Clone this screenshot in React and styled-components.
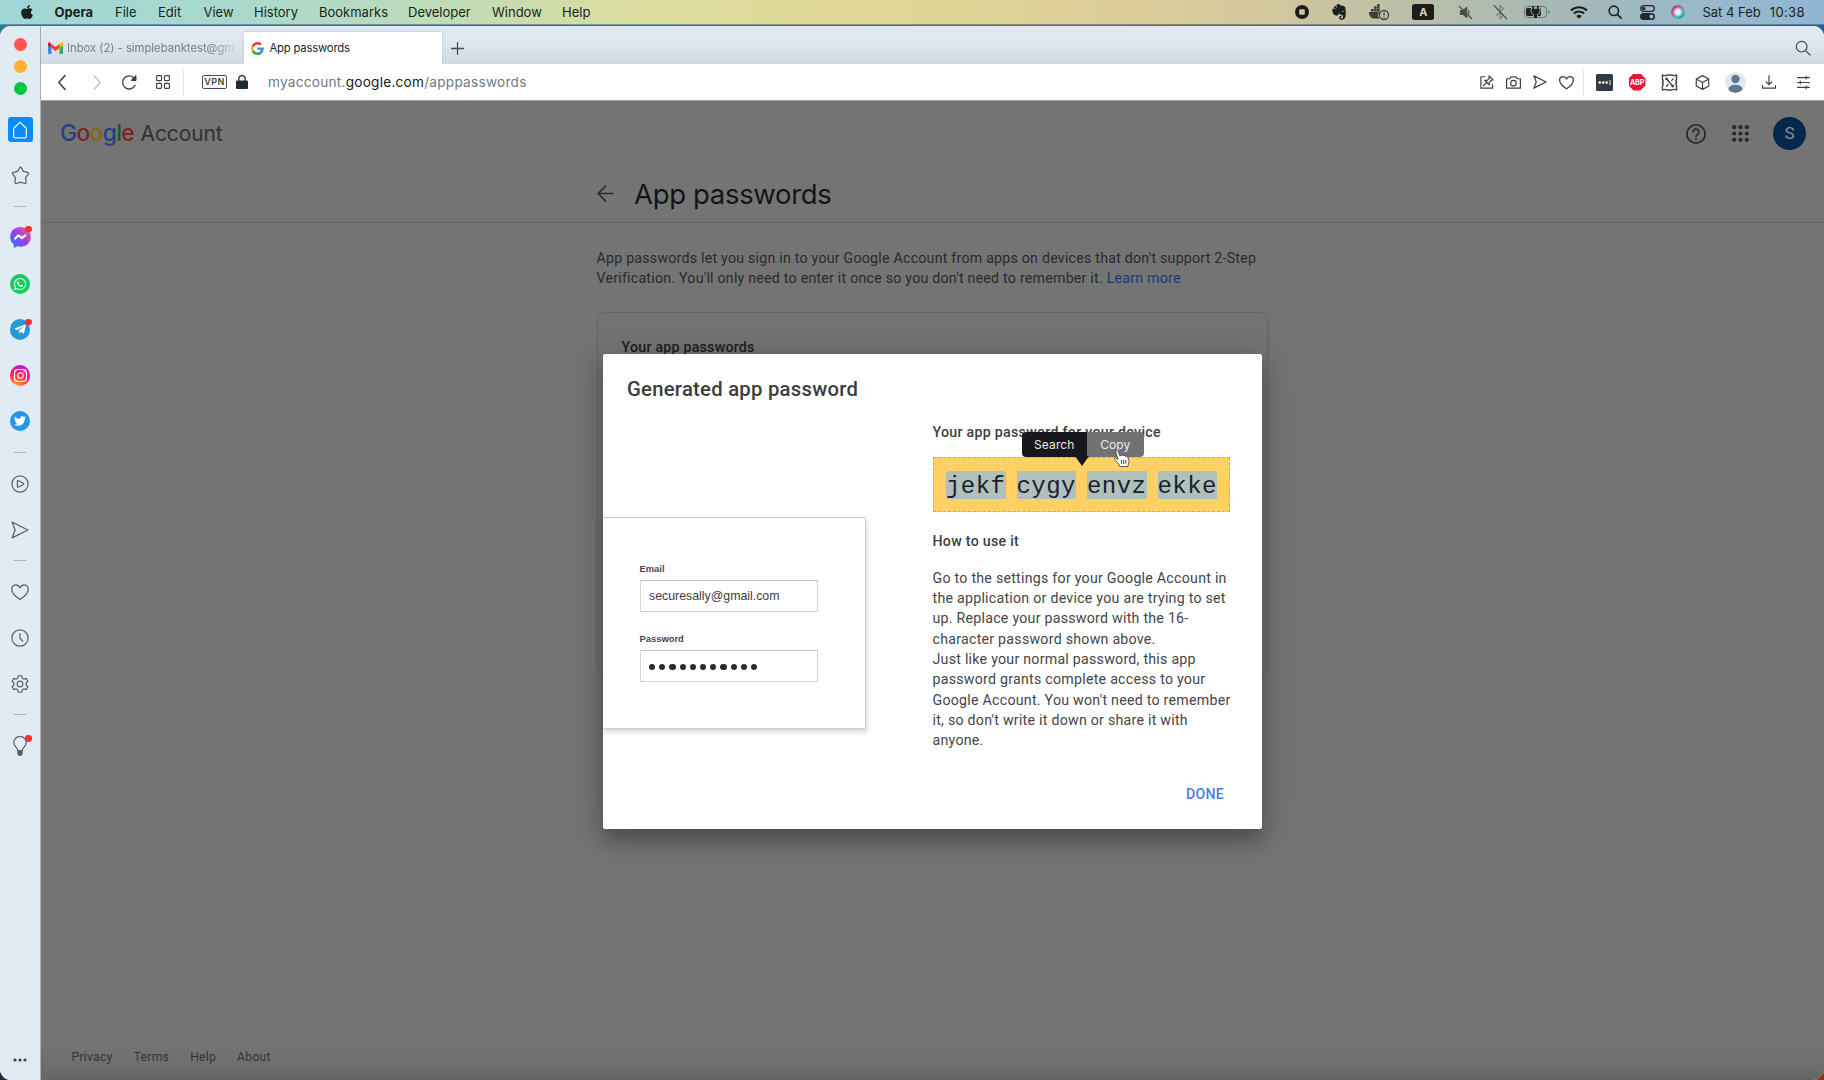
import React from "react";
import styled, { createGlobalStyle } from "styled-components";
import { FaApple, FaWhatsapp, FaTelegramPlane, FaInstagram, FaTwitter, FaEvernote } from "react-icons/fa";

const sans = `Roboto, "Liberation Sans", sans-serif`;
const ui = `Inter, Roboto, sans-serif`;

const GlobalStyle = createGlobalStyle`
  * { box-sizing: border-box; }
  body { margin: 0; overflow: hidden; background: #2b3a48; font-family: ${sans}; }
  svg { display: block; flex: none; overflow: visible; }
`;

const Desktop = styled.div`
  width: 1824px;
  height: 1080px;
  display: flex;
  flex-direction: column;
  overflow: hidden;
  background: linear-gradient(90deg, #2c7b98 0, #3f7482 30%, #7a6b45 60%, #1d62a0 100%) 0 0 / 100% 60px no-repeat,
    linear-gradient(90deg, #1d2b39 0, #1d2b39 50%, #8c2f18 100%);
`;

const MenuBar = styled.header`
  height: 25px;
  flex: none;
  display: flex;
  justify-content: space-between;
  padding: 0 19px 0 19px;
  background: linear-gradient(90deg, #9fd6d6 0, #aad9cb 14%, #bedcb8 24%, #dadc9f 34%, #e2d795 48%, #dccd98 62%, #d2c69e 70%, #bfc0a6 76%, #a9b9b3 84%, #9bb9c8 92%, #8fb6d4 100%);
  border-bottom: 1px solid rgba(50, 90, 110, 0.55);
  font: 400 13px/24px ${ui};
  color: #1a1f20;
`;

const Row = styled.div`
  display: flex;
  align-items: center;
`;

const MenuItem = styled.span`
  width: ${(p) => p.$w}px;
  white-space: nowrap;
  letter-spacing: ${(p) => p.$ls || 0}px;
  font-weight: ${(p) => (p.$bold ? 700 : 400)};
`;

const Slot = styled.span`
  width: ${(p) => p.$w}px;
  height: ${(p) => p.$h || 24}px;
  flex: none;
  display: flex;
  align-items: center;
  justify-content: center;
  color: ${(p) => p.$c || "inherit"};
`;

const InputBadge = styled.span`
  width: 22px;
  height: 16px;
  border-radius: 2.5px;
  background: #1c1d1a;
  color: #d8d2b8;
  font: 700 11px/16px ${ui};
  text-align: center;
`;

const Clock = styled.span`
  display: flex;
  gap: 9px;
  margin-left: 10px;
  white-space: nowrap;
  span + span { letter-spacing: 0.4px; }
`;

const Window = styled.div`
  flex: 1;
  margin-top: 1px;
  display: flex;
  border-radius: 11px;
  overflow: hidden;
  background: #e1eaf3;
`;

const Sidebar = styled.aside`
  width: 41px;
  flex: none;
  display: flex;
  flex-direction: column;
  align-items: center;
  border-right: 1px solid #a3afb7;
  background: #e1ebf4;
  color: #59636d;
`;

const Lights = styled.div`
  display: flex;
  flex-direction: column;
  gap: 9.4px;
  margin: 11.5px 0 12.6px;
  i { width: 13px; height: 13px; border-radius: 50%; }
  i:nth-child(1) { background: #ff5450; }
  i:nth-child(2) { background: #ffb232; }
  i:nth-child(3) { background: #02c640; }
`;

const SideItem = styled.div`
  position: relative;
  height: ${(p) => p.$h || 45.8}px;
  flex: none;
  width: 40px;
  display: flex;
  align-items: center;
  justify-content: center;
`;

const HomeTile = styled.span`
  width: 25px;
  height: 25px;
  border-radius: 3px;
  display: grid;
  place-items: center;
  background: #058cff;
  color: #e9f4ff;
`;

const Brand = styled.span`
  width: 20.5px;
  height: 20.5px;
  border-radius: 50%;
  display: grid;
  place-items: center;
  color: #fff;
  background: ${(p) => p.$bg};
`;

const Dot = styled.i`
  position: absolute;
  left: 25px;
  top: ${(p) => p.$top || 11}px;
  width: 6.5px;
  height: 6.5px;
  border-radius: 50%;
  background: #ff2e2e;
`;

const Rule = styled.hr`
  width: 12px;
  height: 1px;
  border: 0;
  margin: 0;
  flex: none;
  background: #a9b4bd;
`;

const Spacer = styled.div`
  flex: 1;
`;

const Main = styled.div`
  flex: 1;
  min-width: 0;
  display: flex;
  flex-direction: column;
`;

const TabBar = styled.div`
  height: 38px;
  flex: none;
  display: flex;
  align-items: flex-end;
  background: linear-gradient(180deg, #e2e9f2 0, #dde5ee 45%, #d1d9e4 100%);
`;

const Tab = styled.div`
  width: ${(p) => (p.$active ? 198.5 : 202.5)}px;
  height: 32px;
  display: flex;
  align-items: center;
  gap: ${(p) => (p.$active ? 6 : 4)}px;
  padding-left: 7px;
  background: ${(p) => (p.$active ? "#fff" : "transparent")};
  box-shadow: ${(p) => (p.$active ? "0 0 2px #aab8c6" : "none")};
  color: ${(p) => (p.$active ? "#1f252b" : "#74808c")};
  font: 400 11.3px/32px ${ui};
  white-space: nowrap;
  span {
    letter-spacing: ${(p) => (p.$active ? -0.2 : -0.02)}px;
    ${(p) => (p.$active ? "" : "mask-image: linear-gradient(90deg, #000 86%, rgba(0, 0, 0, 0.15) 100%);")}
  }
`;

const AddressBar = styled.div`
  height: 36px;
  flex: none;
  display: flex;
  align-items: center;
  background: #fff;
  color: #3c444c;
`;

const Divider = styled.span`
  width: 1px;
  height: 27px;
  background: #e4e7ea;
`;

const Vpn = styled.span`
  width: 25px;
  height: 14px;
  margin-left: 18px;
  border: 1.3px solid #444c54;
  border-radius: 2px;
  font: 600 9px/11.5px ${ui};
  letter-spacing: 0.4px;
  text-align: center;
`;

const Url = styled.span`
  margin-left: 11px;
  font: 400 13.6px/20px ${ui};
  letter-spacing: 0.26px;
  color: #6d7a88;
  white-space: nowrap;
  b { font-weight: 400; color: #14181c; }
`;

const Page = styled.main`
  flex: 1;
  min-height: 0;
  position: relative;
  display: flex;
  flex-direction: column;
  background: linear-gradient(180deg, #747474 0, #747474 96%, #716f71 98%, #666 100%);
  border-top: 1px solid #999;
`;

const PageHead = styled.div`
  height: 122px;
  flex: none;
  border-bottom: 1.5px solid #666;
`;

const TopRow = styled.div`
  height: 65.5px;
  display: flex;
  align-items: center;
  justify-content: space-between;
  padding: 0 18px 0 19px;
`;

const Logo = styled.div`
  display: flex;
  align-items: baseline;
  font-family: ${ui};
  font-size: 21px;
  line-height: 30px;
  color: #303132;
`;

const LogoWord = styled.span`
  width: 80.5px;
  font-size: 22.8px;
  letter-spacing: -0.65px;
  font-weight: 500;
`;

const LogoLetter = styled.span`
  color: ${(p) => p.$c};
`;

const Account = styled.span`
  letter-spacing: -0.1px;
`;

const Avatar = styled.span`
  width: 33px;
  height: 33px;
  margin-left: 10.5px;
  border-radius: 50%;
  background: #03284c;
  color: #8a8f95;
  font: 400 17px/33px ${sans};
  text-align: center;
`;

const TitleRow = styled.div`
  display: flex;
  align-items: center;
  gap: 20px;
  height: 54px;
  padding-left: 556px;
  color: #2c2d2e;
`;

const Title = styled.h1`
  margin: 0;
  font: 400 27.5px/36px ${ui};
  letter-spacing: -0.33px;
  color: #141415;
`;

const Intro = styled.p`
  width: 700px;
  margin: 24.5px 0 0 555.5px;
  font: 400 14.2px/20.35px ${sans};
  letter-spacing: 0.23px;
  color: #292a2c;
  white-space: nowrap;
  a { color: #173a78; }
`;

const Card = styled.section`
  width: 671px;
  height: 364.5px;
  margin: 23.5px 0 0 555.5px;
  padding: 24px;
  border: 1.5px solid #666;
  border-radius: 8px;
  font: 500 14.2px/20px ${sans};
  letter-spacing: 0.24px;
  color: #1d1e20;
`;

const Footer = styled.footer`
  display: flex;
  margin: auto 0 15px 30.5px;
  gap: 21px;
  font: 400 12.2px/16px ${sans};
  letter-spacing: 0.25px;
  color: #343536;
`;

const Modal = styled.div`
  position: absolute;
  left: 561.5px;
  top: 253px;
  width: 659.5px;
  height: 475px;
  border-radius: 2px;
  display: flex;
  flex-direction: column;
  background: #fff;
  box-shadow: 0 12px 18px rgba(0, 0, 0, 0.24), 0 3px 36px 4px rgba(0, 0, 0, 0.16);
`;

const ModalTitle = styled.h2`
  margin: 23px 0 0 24.5px;
  font: 500 20.3px/24px ${sans};
  letter-spacing: 0.25px;
  color: #3b3c3f;
`;

const ModalBody = styled.div`
  display: flex;
  justify-content: space-between;
  align-items: flex-start;
`;

const Sample = styled.div`
  width: 263.5px;
  height: 211.5px;
  margin-top: 116px;
  padding: 44px 0 0 37px;
  border: 1px solid #cfcfcf;
  border-left: 0;
  box-shadow: 1px 3px 5px rgba(0, 0, 0, 0.17);
`;

const Label = styled.div`
  font: 700 9.4px/14px "Liberation Sans", sans-serif;
  color: #47484a;
`;

const Field = styled.div`
  width: 178.5px;
  height: 32px;
  margin: ${(p) => p.$m};
  padding: 1.5px 0 0 8.5px;
  display: flex;
  align-items: center;
  gap: 3.9px;
  border: 1.2px solid #d4d4d4;
  border-top-color: #c2c2c2;
  font: 400 12.35px/29px "Liberation Sans", sans-serif;
  color: #3d3e40;
  i { width: 6.3px; height: 6.3px; border-radius: 50%; background: #2c2c2c; }
`;

const Info = styled.div`
  position: relative;
  width: 297px;
  margin: 20.5px 32.5px 0 0;
  font: 400 14.2px/20.35px ${sans};
  letter-spacing: 0.25px;
  color: #444649;
`;

const SubHead = styled.h3`
  margin: 0;
  font: 500 14.2px/20.35px ${sans};
  letter-spacing: 0.28px;
  color: #3d3f42;
`;

const Secret = styled.div`
  height: 54.5px;
  margin: 15.5px 0 19px;
  padding-left: 12.5px;
  display: flex;
  align-items: center;
  gap: 11px;
  background: #ffd163;
  border: 1px dashed #cfae62;
  font: 400 24px/32px "Liberation Mono", monospace;
  letter-spacing: 0.45px;
  color: #17222b;
  span { width: 59.5px; height: 28px; background: #b1c0ba; }
`;

const Body = styled.p`
  margin: 16.5px 0 0;
  white-space: nowrap;
`;

const Done = styled.button`
  align-self: flex-end;
  margin: auto 38px 25.5px 0;
  padding: 0;
  border: 0;
  background: none;
  font: 500 14.2px/20px ${sans};
  letter-spacing: 0.2px;
  color: #4a7cdd;
`;

const Popup = styled.div`
  position: absolute;
  left: 89px;
  top: 10px;
  display: flex;
  font: 400 12px/25px ${ui};
  letter-spacing: 0.1px;
  text-align: center;
  color: #e9e9ea;
`;

const PopupItem = styled.span`
  width: ${(p) => p.$w}px;
  height: 25px;
  background: ${(p) => (p.$hover ? "#727174" : "#18181c")};
  border-radius: ${(p) => (p.$hover ? "0 4px 4px 0" : "4px 0 0 4px")};
`;

const PopupArrow = styled.i`
  position: absolute;
  left: 53px;
  top: 24.5px;
  border: solid transparent;
  border-width: 10.5px 7.5px 0;
  border-top-color: #18181c;
`;

const Cursor = styled.span`
  position: absolute;
  left: 92px;
  top: 18.5px;
`;

const Abp = styled.span`
  width: 17px;
  height: 17px;
  flex: none;
  background: #ed1436;
  color: #fff;
  clip-path: polygon(30% 0, 70% 0, 100% 30%, 100% 70%, 70% 100%, 30% 100%, 0 70%, 0 30%);
  font: 700 7.2px/17px ${ui};
  letter-spacing: -0.2px;
  text-align: center;
`;

const Ico = ({ s = 16, w = 1.3, vb = 24, children, fill = "none" }) => (
  <svg width={s} height={s} viewBox={`0 0 ${vb} ${vb}`} fill={fill} stroke={fill === "none" ? "currentColor" : "none"} strokeWidth={(w * vb) / s} strokeLinecap="round" strokeLinejoin="round">
    {children}
  </svg>
);

const Send = ({ s }) => (
  <Ico s={s}><path d="M1.5 1.5 22.5 12 1.5 22.5 5.5 12Z" /></Ico>
);
const Heart = ({ s }) => (
  <Ico s={s}><path d="M12 22C9 20 1 14 1 8.200 1 4.800 3.500 2.500 6.500 2.500 9 2.500 11 4 12 6.500 13 4 15 2.500 17.500 2.500 20.500 2.500 23 4.800 23 8.200 23 14 15 20 12 22Z" /></Ico>
);
const Search = ({ s, w }) => (
  <Ico s={s} w={w}><circle cx="10" cy="10" r="8" /><path d="m16 16 6.500 6.500" /></Ico>
);

const GoogleG = () => (
  <svg width="13" height="13" viewBox="0 0 48 48">
    <path fill="#EA4335" d="M24 9.500c3.540 0 6.710 1.220 9.210 3.600l6.850-6.850C35.900 2.380 30.470 0 24 0 14.620 0 6.510 5.380 2.560 13.220l7.980 6.190C12.430 13.720 17.740 9.500 24 9.500z" />
    <path fill="#4285F4" d="M46.980 24.550c0-1.570-.15-3.090-.38-4.550H24v9.020h12.940c-.58 2.960-2.260 5.480-4.780 7.180l7.730 6c4.510-4.180 7.090-10.360 7.090-17.650z" />
    <path fill="#FBBC05" d="M10.530 28.590c-.48-1.450-.76-2.990-.76-4.590s.27-3.140.76-4.590l-7.980-6.190C.92 16.460 0 20.120 0 24s.92 7.540 2.560 10.780l7.970-6.190z" />
    <path fill="#34A853" d="M24 48c6.480 0 11.930-2.130 15.890-5.810l-7.730-6c-2.150 1.450-4.920 2.300-8.160 2.300-6.260 0-11.570-4.220-13.470-9.910l-7.980 6.190C6.510 42.620 14.620 48 24 48z" />
  </svg>
);

const Gmail = () => (
  <svg width="15" height="12" viewBox="0 0 30 24">
    <path fill="#4285F4" d="M0 4v18a2 2 0 0 0 2 2h5V10z" />
    <path fill="#34A853" d="M30 4v18a2 2 0 0 1-2 2h-5V10z" />
    <path fill="#C5221F" d="M0 4v3l7 5V5L4 1C2 0 0 1 0 4z" />
    <path fill="#FBBC04" d="M30 4v3l-7 5V5l3-4c2-1 4 0 4 3z" />
    <path fill="#EA4335" d="m7 4 8 6 8-6v8l-8 6-8-6z" />
  </svg>
);

const menu = [
  ["Opera", 60.5, 0], ["File", 43], ["Edit", 45.5], ["View", 50.5], ["History", 65],
  ["Bookmarks", 89], ["Developer", 84], ["Window", 70], ["Help", 40],
];

const MenuIcons = () => (
  <Row>
    <Slot $w={37}><Ico s={14} vb={14} fill="#1c1d1a"><path fillRule="evenodd" d="M7 0a7 7 0 1 0 0 14A7 7 0 0 0 7 0ZM5.300 4.200h3.400q1.100 0 1.100 1.100v3.400q0 1.100-1.100 1.100H5.300q-1.100 0-1.100-1.100V5.300q0-1.100 1.100-1.100Z" /></Ico></Slot>
    <Slot $w={38}><FaEvernote size={18} /></Slot>
    <Slot $w={42}>
      <svg width="20" height="16" viewBox="0 0 20 16">
        <path fill="#3d4036" d="M0 8h10.500a5 5 0 0 0 0 6.500H5C2 14.500 0 12 0 8ZM2 5h2.700v2.500H2ZM5 5h2.700v2.500H5ZM8 5h2.700v2.500H8ZM5 2.300h2.700v2.400H5ZM8 2.300h2.700v2.400H8ZM8 0h2.700v2H8Z" />
        <circle cx="15" cy="11" r="4.500" fill="none" stroke="#3d4036" strokeWidth="1.300" />
        <path d="M15 8.500v3M15 12.700v1" stroke="#3d4036" strokeWidth="1.400" />
      </svg>
    </Slot>
    <Slot $w={46}><InputBadge>A</InputBadge></Slot>
    <Slot $w={38} $c="#4b5046">
      <Ico s={15} w={1.1}><path fill="currentColor" d="M4 9h4l6-5v16l-6-5H4Z" /><path d="M2 2 22 22M17 9q2 3 0 6" /></Ico>
    </Slot>
    <Slot $w={32} $c="#777e74">
      <Ico s={16} w={1.1}><path d="m7 7 10 10-5 5V2l5 5L7 17" /><path stroke="#444a44" d="M3 2 22 22" /></Ico>
    </Slot>
    <Slot $w={42}>
      <svg width="26" height="12" viewBox="0 0 26 12">
        <rect x=".5" y=".5" width="22" height="11" rx="3" fill="none" stroke="#6b736e" />
        <path d="M24.200 4v4q1.300-.6 1.300-2t-1.300-2Z" fill="#6b736e" />
        <rect x="2" y="2" width="15" height="8" rx="1.500" fill="#1f2120" />
        <path d="M7 2.500h9v3q0 2.300-2.500 2.900V12.500h-4V8.400Q7 7.800 7 5.500Z" fill="#1f2120" stroke="#b3bab0" strokeWidth=".8" />
        <path d="M9.200-.3v3.500M13.800-.3v3.500" stroke="#1f2120" strokeWidth="1.700" />
      </svg>
    </Slot>
    <Slot $w={41}>
      <svg width="18" height="13" viewBox="0 0 18 13" fill="none" stroke="#1b1d1d" strokeWidth="2">
        <path d="M1 4.500a11.500 11.500 0 0 1 16 0M3.900 7.500a7.300 7.300 0 0 1 10.200 0" />
        <path d="M9 12.800 6.200 10a4 4 0 0 1 5.600 0Z" fill="#1b1d1d" stroke="none" />
      </svg>
    </Slot>
    <Slot $w={31}><Search s={14} w={1.6} /></Slot>
    <Slot $w={34}>
      <svg width="15" height="15" viewBox="0 0 15 15" fill="none" stroke="#23282a">
        <rect x=".7" y=".7" width="13.600" height="5.600" rx="2.800" strokeWidth="1.300" />
        <circle cx="3.700" cy="3.500" r="1.800" fill="#23282a" stroke="none" />
        <rect x="0" y="8" width="15" height="7" rx="3.500" fill="#23282a" stroke="none" />
        <circle cx="11.400" cy="11.500" r="1.900" fill="#a7bcc6" stroke="none" />
      </svg>
    </Slot>
    <Slot $w={28}>
      <svg width="14" height="14" viewBox="0 0 14 14">
        <defs>
          <linearGradient id="siri" x1="0" y1="0" x2="1" y2="1"><stop offset="0" stopColor="#4a4aa0" /><stop offset=".35" stopColor="#e0508c" /><stop offset=".65" stopColor="#39c1c4" /><stop offset="1" stopColor="#2464b0" /></linearGradient>
          <radialGradient id="siriGlow"><stop offset="0" stopColor="#fff" /><stop offset=".5" stopColor="#eef8fb" stopOpacity=".8" /><stop offset="1" stopColor="#fff" stopOpacity="0" /></radialGradient>
        </defs>
        <circle cx="7" cy="7" r="7" fill="url(#siri)" />
        <circle cx="6.800" cy="7" r="5" fill="url(#siriGlow)" />
      </svg>
    </Slot>
    <Clock><span>Sat 4 Feb</span><span>10:38</span></Clock>
  </Row>
);

const Side = () => (
  <Sidebar>
    <Lights><i /><i /><i /></Lights>
    <SideItem $h={44}><HomeTile><Ico s={18} w={1.3}><path d="M12 1.500 20.500 10v10.500q0 2-2 2h-13q-2 0-2-2V10Z" /></Ico></HomeTile></SideItem>
    <SideItem $h={48}><Ico s={19}><path d="M12 1.500q.7 0 1.200 1l2.400 4.300 5.300 1.200q2.300.7.700 2.500l-3.200 4.100.6 5.800q0 2.200-2 1.700L12 20.300l-5 1.800q-2 .5-2-1.700l.6-5.800L2.400 10.500Q.8 8.700 3.100 8l5.300-1.200 2.400-4.300q.5-1 1.200-1Z" /></Ico></SideItem>
    <SideItem $h={14}><Rule /></SideItem>
    <SideItem $h={47}>
      <svg width="21" height="21" viewBox="0 0 21 21">
        <defs><linearGradient id="msg" x1="0" y1="1" x2="1" y2="0"><stop offset="0" stopColor="#1583ff" /><stop offset=".5" stopColor="#9a3df2" /><stop offset="1" stopColor="#ff6270" /></linearGradient></defs>
        <path fill="url(#msg)" d="M10.500 0C4.500 0 .2 4.200.2 10c0 3 1.200 5.600 3.300 7.300L4 21l3.400-1.700c1 .3 2 .4 3.100.4 6 0 10.300-4.200 10.300-9.800S16.500 0 10.500 0Z" />
        <path fill="none" stroke="#fff" strokeWidth="2.200" strokeLinejoin="round" d="m4.500 12.300 4-3.900 3.400 2.700L16 7.800" />
      </svg>
      <Dot $top={12} />
    </SideItem>
    <SideItem><Brand $bg="#12cf5d"><FaWhatsapp size={14} /></Brand></SideItem>
    <SideItem><Brand $bg="#2799d7"><FaTelegramPlane size={12.5} /></Brand><Dot $top={12} /></SideItem>
    <SideItem><Brand $bg="radial-gradient(circle at 30% 105%, #ffc24d 0, #ff6b2e 25%, #ff1b6b 55%, #9a1fe8 95%)"><FaInstagram size={15} /></Brand></SideItem>
    <SideItem><Brand $bg="#2398e8"><FaTwitter size={12} /></Brand></SideItem>
    <SideItem $h={17}><Rule /></SideItem>
    <SideItem><Ico s={18} w={1.2}><circle cx="12" cy="12" r="10.800" /><path d="M8.500 8q0-1 1-.6l7 3.700q1.200.8 0 1.600l-7 3.600q-1 .5-1-.6Z" /></Ico></SideItem>
    <SideItem><Send s={18} /></SideItem>
    <SideItem $h={16.5}><Rule /></SideItem>
    <SideItem><Heart s={18} /></SideItem>
    <SideItem><Ico s={18} w={1.2}><circle cx="12" cy="12" r="10.800" /><path d="M12 6v6l3.500 4" /></Ico></SideItem>
    <SideItem><Ico s={18} w={1.2}><circle cx="12" cy="12" r="3.800" /><path d="M9.800 1h4.400l.9 3.300 2 1.100 3.200-.9 2.200 3.800-2.300 2.400v2.600l2.300 2.400-2.200 3.800-3.200-.9-2 1.100-.9 3.300H9.800l-.9-3.300-2-1.100-3.200.9-2.200-3.800 2.300-2.400v-2.600L1.500 8.300l2.200-3.800 3.200.9 2-1.100Z" /></Ico></SideItem>
    <SideItem $h={16.5}><Rule /></SideItem>
    <SideItem><Ico s={20} w={1.2}><path d="M9.200 17.500C9 13.500 4.500 12.500 4.500 8a7.500 7.500 0 0 1 15 0c0 4.500-4.500 5.500-4.700 9.500Z" /><path fill="currentColor" d="M9.500 18h5v3l-1 2h-3l-1-2Z" /></Ico><Dot $top={12} /></SideItem>
    <Spacer />
    <SideItem $h={40}><Ico s={14} vb={14} fill="#39424b"><circle cx="2" cy="7" r="1.600" /><circle cx="7" cy="7" r="1.600" /><circle cx="12" cy="7" r="1.600" /></Ico></SideItem>
  </Sidebar>
);

const Tabs = () => (
  <TabBar>
    <Tab><Gmail /><span>Inbox (2) - simplebanktest@gm</span></Tab>
    <Tab $active><GoogleG /><span>App passwords</span></Tab>
    <Slot $w={31} $h={32} $c="#454d55"><Ico s={13}><path d="M12 1v22M1 12h22" /></Ico></Slot>
    <Spacer />
    <Slot $w={42} $h={32} $c="#414951"><Search s={16} w={1.2} /></Slot>
  </TabBar>
);

const Address = () => (
  <AddressBar>
    <Slot $w={42}><Ico s={15} w={1.5}><path d="M16 1 6 12l10 11" /></Ico></Slot>
    <Slot $w={26} $c="#b9bec3"><Ico s={15} w={1.3}><path d="m8 1 10 11L8 23" /></Ico></Slot>
    <Slot $w={40}><Ico s={15} w={1.4}><path d="M21 16.500A10.500 10.500 0 1 1 19.500 5" /><path fill="currentColor" d="M22 1.500v7h-6.500Z" /></Ico></Slot>
    <Slot $w={28}><Ico s={14} w={1.2}><rect x="1" y="1" width="8.500" height="8.500" rx="1.500" /><rect x="14.500" y="1" width="8.500" height="8.500" rx="1.500" /><rect x="1" y="14.500" width="8.500" height="8.500" rx="1.500" /><rect x="14.500" y="14.500" width="8.500" height="8.500" rx="1.500" /></Ico></Slot>
    <Slot $w={6} />
    <Divider />
    <Vpn>VPN</Vpn>
    <Slot $w={30} $c="#232b33">
      <svg width="12" height="14" viewBox="0 0 12 14"><rect y="5.500" width="12" height="8.500" rx="1" fill="currentColor" /><path d="M2.800 6V3.800a3.200 3.200 0 0 1 6.400 0V6" fill="none" stroke="currentColor" strokeWidth="1.300" /></svg>
    </Slot>
    <Url>myaccount.<b>google.com</b>/apppasswords</Url>
    <Spacer />
    <Slot $w={26}><Ico s={14} w={1.2}><path d="M8 3H1.500v19.500h20V17" /><path d="m15.500 1.500 7 7-3 .5-4 4 .5 4L8 9l4 .5 4-4ZM11.500 13 6 18.500" /></Ico></Slot>
    <Slot $w={27}><Ico s={15} w={1.2}><path d="M1 6h5l2-3h8l2 3h5v15H1Z" /><circle cx="12" cy="13" r="4.500" /></Ico></Slot>
    <Slot $w={26}><Send s={14} /></Slot>
    <Slot $w={26}><Heart s={15} /></Slot>
    <Slot $w={4} />
    <Divider />
    <Slot $w={41}><svg width="17" height="17" viewBox="0 0 17 17"><rect width="17" height="17" rx="1.500" fill="#303b45" /><circle cx="3.700" cy="8.500" r="1.300" fill="#fff" /><circle cx="7.200" cy="8.500" r="1.300" fill="#fff" /><circle cx="10.700" cy="8.500" r="1.300" fill="#fff" /><path d="M14 6v5" stroke="#fff" strokeWidth=".9" /></svg></Slot>
    <Slot $w={24}><Abp>ABP</Abp></Slot>
    <Slot $w={40}><Ico s={17} w={1.4}><path d="M2 1.500q4 1.500 6.700 0h6.600q2.700 1.500 6.700 0v6q-2 2 0 4.500-2 2.500 0 4.500v6q-4-1.500-6.700 0H8.700q-2.700-1.500-6.700 0v-6q2-2 0-4.500 2-2.500 0-4.500Z" /><path d="m8 7 8.500 10M8 17l2-2M15 9l2-2" /><circle cx="8" cy="7" r="1" /><circle cx="16.500" cy="17" r="1" /></Ico></Slot>
    <Slot $w={26}><Ico s={15} w={1.2}><path d="m12 1 10 5.500v11L12 23 2 17.500v-11ZM2 6.500 12 12l10-5.500M12 12v11" /></Ico></Slot>
    <Slot $w={41}><svg width="21" height="21" viewBox="0 0 21 21"><defs><clipPath id="av"><circle cx="10.500" cy="10.500" r="10.300" /></clipPath></defs><circle cx="10.500" cy="10.500" r="10.300" fill="#dde8f1" /><circle cx="10.500" cy="7" r="4.200" fill="#62778c" /><ellipse cx="10.500" cy="17" rx="7" ry="4.300" fill="#62778c" clipPath="url(#av)" /></svg></Slot>
    <Slot $w={26}><Ico s={14} w={1.2}><path d="M12 1v15M7.500 12l4.500 4.500 4.500-4.500M1 18v4.500h22V18" /></Ico></Slot>
    <Slot $w={42}><Ico s={13} w={1.2}><path d="M1 3h22M1 12h22M1 21h22M17 .5v5M6 9.500v5M17 18.500v5" /></Ico></Slot>
  </AddressBar>
);

const letters = [["G", "#22427f"], ["o", "#7c231d"], ["o", "#8a6512"], ["g", "#22427f"], ["l", "#1a5a2c"], ["e", "#7c231d"]];

const Dialog = () => (
  <Modal>
    <ModalTitle>Generated app password</ModalTitle>
    <ModalBody>
      <Sample>
        <Label>Email</Label>
        <Field $m="4px 0 19.5px">securesally@gmail.com</Field>
        <Label>Password</Label>
        <Field $m="4.5px 0 0">{Array.from({ length: 11 }, (_, i) => <i key={i} />)}</Field>
      </Sample>
      <Info>
        <SubHead>Your app password for your device</SubHead>
        <Secret>{["jekf", "cygy", "envz", "ekke"].map((w) => <span key={w}>{w}</span>)}</Secret>
        <SubHead>How to use it</SubHead>
        <Body>
          Go to the settings for your Google Account in<br />
          the application or device you are trying to set<br />
          up. Replace your password with the 16-<br />
          character password shown above.<br />
          Just like your normal password, this app<br />
          password grants complete access to your<br />
          Google Account. You won't need to remember<br />
          it, so don't write it down or share it with<br />
          anyone.
        </Body>
        <Popup>
          <PopupItem $w={65.5}>Search</PopupItem>
          <PopupItem $w={56.5} $hover>Copy</PopupItem>
          <PopupArrow />
          <Cursor>
            <svg width="16" height="17" viewBox="0 0 16 17">
              <path fill="#fff" stroke="#333" strokeWidth=".8" d="M5.700 16.500 4.700 14Q1.500 10.500.7 9.300q-.2-1.500 1.300-1.400l2 1.500L2 3Q1.400 1 2.700.7 4 .6 4.500 2L6 6.200q.3-1.200 1.300-1.200t1.400 1q.5-.9 1.500-.7.900.1 1.200 1.200.6-.6 1.400-.3.900.3 1.200 1.500l.9 3q.3 2-.5 3.300l-.6 2.500Z" />
              <path stroke="#333" strokeWidth=".9" d="M7.500 10v4M9.700 10v4M11.800 10v3.500" />
            </svg>
          </Cursor>
        </Popup>
      </Info>
    </ModalBody>
    <Done>DONE</Done>
  </Modal>
);

export default function App() {
  return (
    <Desktop>
      <GlobalStyle />
      <MenuBar>
        <Row>
          <MenuItem $w={35.5}><FaApple size={16} /></MenuItem>
          {menu.map(([t, w, ls]) => <MenuItem key={t} $w={w} $ls={ls} $bold={t === "Opera"}>{t}</MenuItem>)}
        </Row>
        <MenuIcons />
      </MenuBar>
      <Window>
        <Side />
        <Main>
          <Tabs />
          <Address />
          <Page>
            <PageHead>
              <TopRow>
                <Logo>
                  <LogoWord>{letters.map(([l, c], i) => <LogoLetter key={i} $c={c}>{l}</LogoLetter>)}</LogoWord>
                  <Account>Account</Account>
                </Logo>
                <Row>
                  <Slot $w={46} $c="#2b2c2d"><Ico s={20} w={1.8}><circle cx="12" cy="12" r="11" /><path d="M8.500 9.500a3.500 3.500 0 1 1 5.500 2.900q-2 1.300-2 2.600M12 18v.3" /></Ico></Slot>
                  <Slot $w={44}><Ico s={17} vb={17} fill="#29292a">{[2.2, 8.5, 14.8].map((y) => [2.2, 8.5, 14.8].map((x) => <circle key={x + "-" + y} cx={x} cy={y} r="2.100" />))}</Ico></Slot>
                  <Avatar>S</Avatar>
                </Row>
              </TopRow>
              <TitleRow>
                <Ico s={17} w={1.7}><path d="M12 1.500 1.500 12 12 22.500M1.500 12h21" /></Ico>
                <Title>App passwords</Title>
              </TitleRow>
            </PageHead>
            <Intro>
              App passwords let you sign in to your Google Account from apps on devices that don't support 2-Step<br />
              Verification. You'll only need to enter it once so you don't need to remember it. <a>Learn more</a>
            </Intro>
            <Card>Your app passwords</Card>
            <Footer><span>Privacy</span><span>Terms</span><span>Help</span><span>About</span></Footer>
            <Dialog />
          </Page>
        </Main>
      </Window>
    </Desktop>
  );
}
